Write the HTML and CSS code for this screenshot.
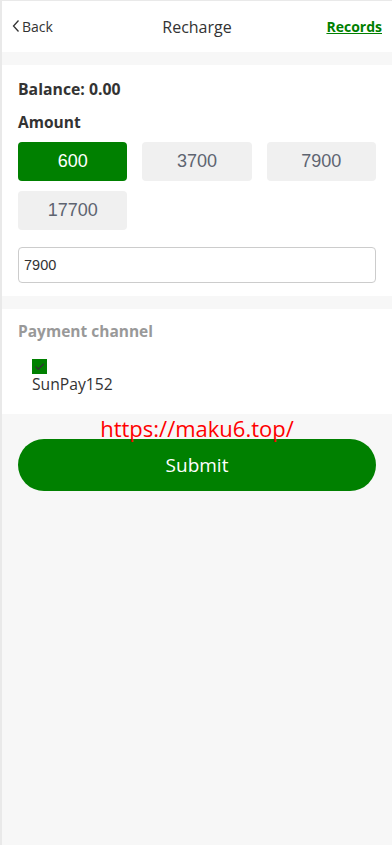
FILE: index.html
```html
<!DOCTYPE html>
<html lang="en">
<head>
<meta charset="utf-8">
<meta name="viewport" content="width=device-width, initial-scale=1">
<title>Recharge</title>
<link rel="stylesheet" href="styles.css">
</head>
<body>
<div class="page">
  <header class="topbar">
    <a class="back" href="#">
      <svg class="chev" width="8" height="14" viewBox="0 0 8 14"><path d="M6.5 1.5 L1.5 7 L6.5 12.5" fill="none" stroke="#333" stroke-width="1.3"/></svg>
      <span>Back</span>
    </a>
    <h1 class="title">Recharge</h1>
    <a class="records" href="#">Records</a>
  </header>

  <section class="card amount-card">
    <div class="balance">Balance: 0.00</div>
    <div class="label">Amount</div>
    <div class="amounts">
      <button class="amt active">600</button>
      <button class="amt">3700</button>
      <button class="amt">7900</button>
      <button class="amt">17700</button>
    </div>
    <input class="amount-input" type="text" value="7900">
  </section>

  <section class="card pay-card">
    <div class="label muted">Payment channel</div>
    <div class="channel">
      <span class="check">
        <svg width="15" height="15" viewBox="0 0 15 15"><path d="M3.5 7.5 L6.3 10.2 L11.8 4.8" fill="none" stroke="#333" stroke-width="1.4"/></svg>
      </span>
      <span class="channel-name">SunPay152</span>
    </div>
  </section>

  <div class="footer">
    <div class="url">https://maku6.top/</div>
    <button class="submit">Submit</button>
  </div>
</div>
</body>
</html>
```

FILE: styles.css
```css
html, body {
  margin: 0;
  padding: 0;
  background: #f8f8f8;
}
* { box-sizing: border-box; }
.page {
  min-height: 845px;
  border-left: 2px solid #e9e9e9;
  border-top: 1px solid #e9e9e9;
  background: #f7f7f7;
  font-family: "Open Sans", "Noto Sans", sans-serif;
  color: #333;
}
.topbar {
  height: 51px;
  background: #fff;
  display: flex;
  align-items: center;
  justify-content: space-between;
  padding: 0 10px 0 10px;
  position: relative;
}
.back {
  display: flex;
  align-items: center;
  gap: 2px;
  color: #333;
  text-decoration: none;
  font-size: 14px;
}
.chev { margin-top: -1px; }
.title {
  position: absolute;
  left: 0;
  right: 0;
  text-align: center;
  margin: 0;
  font-size: 16px;
  font-weight: 400;
  pointer-events: none;
  color: #333;
}
.records {
  color: #008000;
  font-weight: 700;
  font-size: 14px;
  text-decoration: underline;
}
.card {
  background: #fff;
  padding: 0 16px;
}
.amount-card {
  margin-top: 13px;
  padding-top: 13px;
  padding-bottom: 13px;
}
.balance {
  font-weight: 700;
  font-size: 15.8px;
  line-height: 22px;
}
.label {
  font-weight: 700;
  font-size: 15.5px;
  line-height: 22px;
  margin-top: 11px;
}
.amounts {
  display: grid;
  grid-template-columns: repeat(3, 1fr);
  column-gap: 15px;
  row-gap: 10px;
  margin-top: 9px;
}
.amt {
  height: 39px;
  border: 0;
  border-radius: 4px;
  background: #f0f0f0;
  color: #5e6470;
  font-family: "Liberation Sans", Arial, sans-serif;
  font-size: 18px;
  padding: 0;
}
.amt.active {
  background: #008000;
  color: #fff;
}
.amount-input {
  display: block;
  width: 100%;
  height: 36px;
  margin-top: 17px;
  border: 1px solid #ccc;
  border-radius: 4px;
  padding: 0 5px;
  font-family: "Liberation Sans", Arial, sans-serif;
  font-size: 14.5px;
  color: #333;
  outline: none;
}
.pay-card {
  margin-top: 13px;
  padding-top: 11px;
  padding-bottom: 20px;
}
.label.muted {
  color: #999;
  margin-top: 0;
}
.channel {
  display: flex;
  flex-direction: column;
  align-items: flex-start;
  padding-left: 14px;
  margin-top: 17px;
}
.check {
  width: 15px;
  height: 15px;
  background: #008000;
  display: block;
}
.check svg { display: block; }
.channel-name {
  font-size: 15.7px;
  line-height: 20px;
  color: #333;
}
.footer {
  padding: 0 16px;
}
.url {
  text-align: center;
  color: #ff0000;
  font-size: 22px;
  line-height: 26px;
  margin-top: 1px;
  margin-bottom: -2px;
  position: relative;
  z-index: 1;
}
.submit {
  display: block;
  width: 100%;
  height: 52px;
  border: 0;
  border-radius: 26px;
  background: #008000;
  color: #fff;
  font-family: "Open Sans", "Noto Sans", sans-serif;
  font-size: 19px;
  font-weight: 500;
}
```
